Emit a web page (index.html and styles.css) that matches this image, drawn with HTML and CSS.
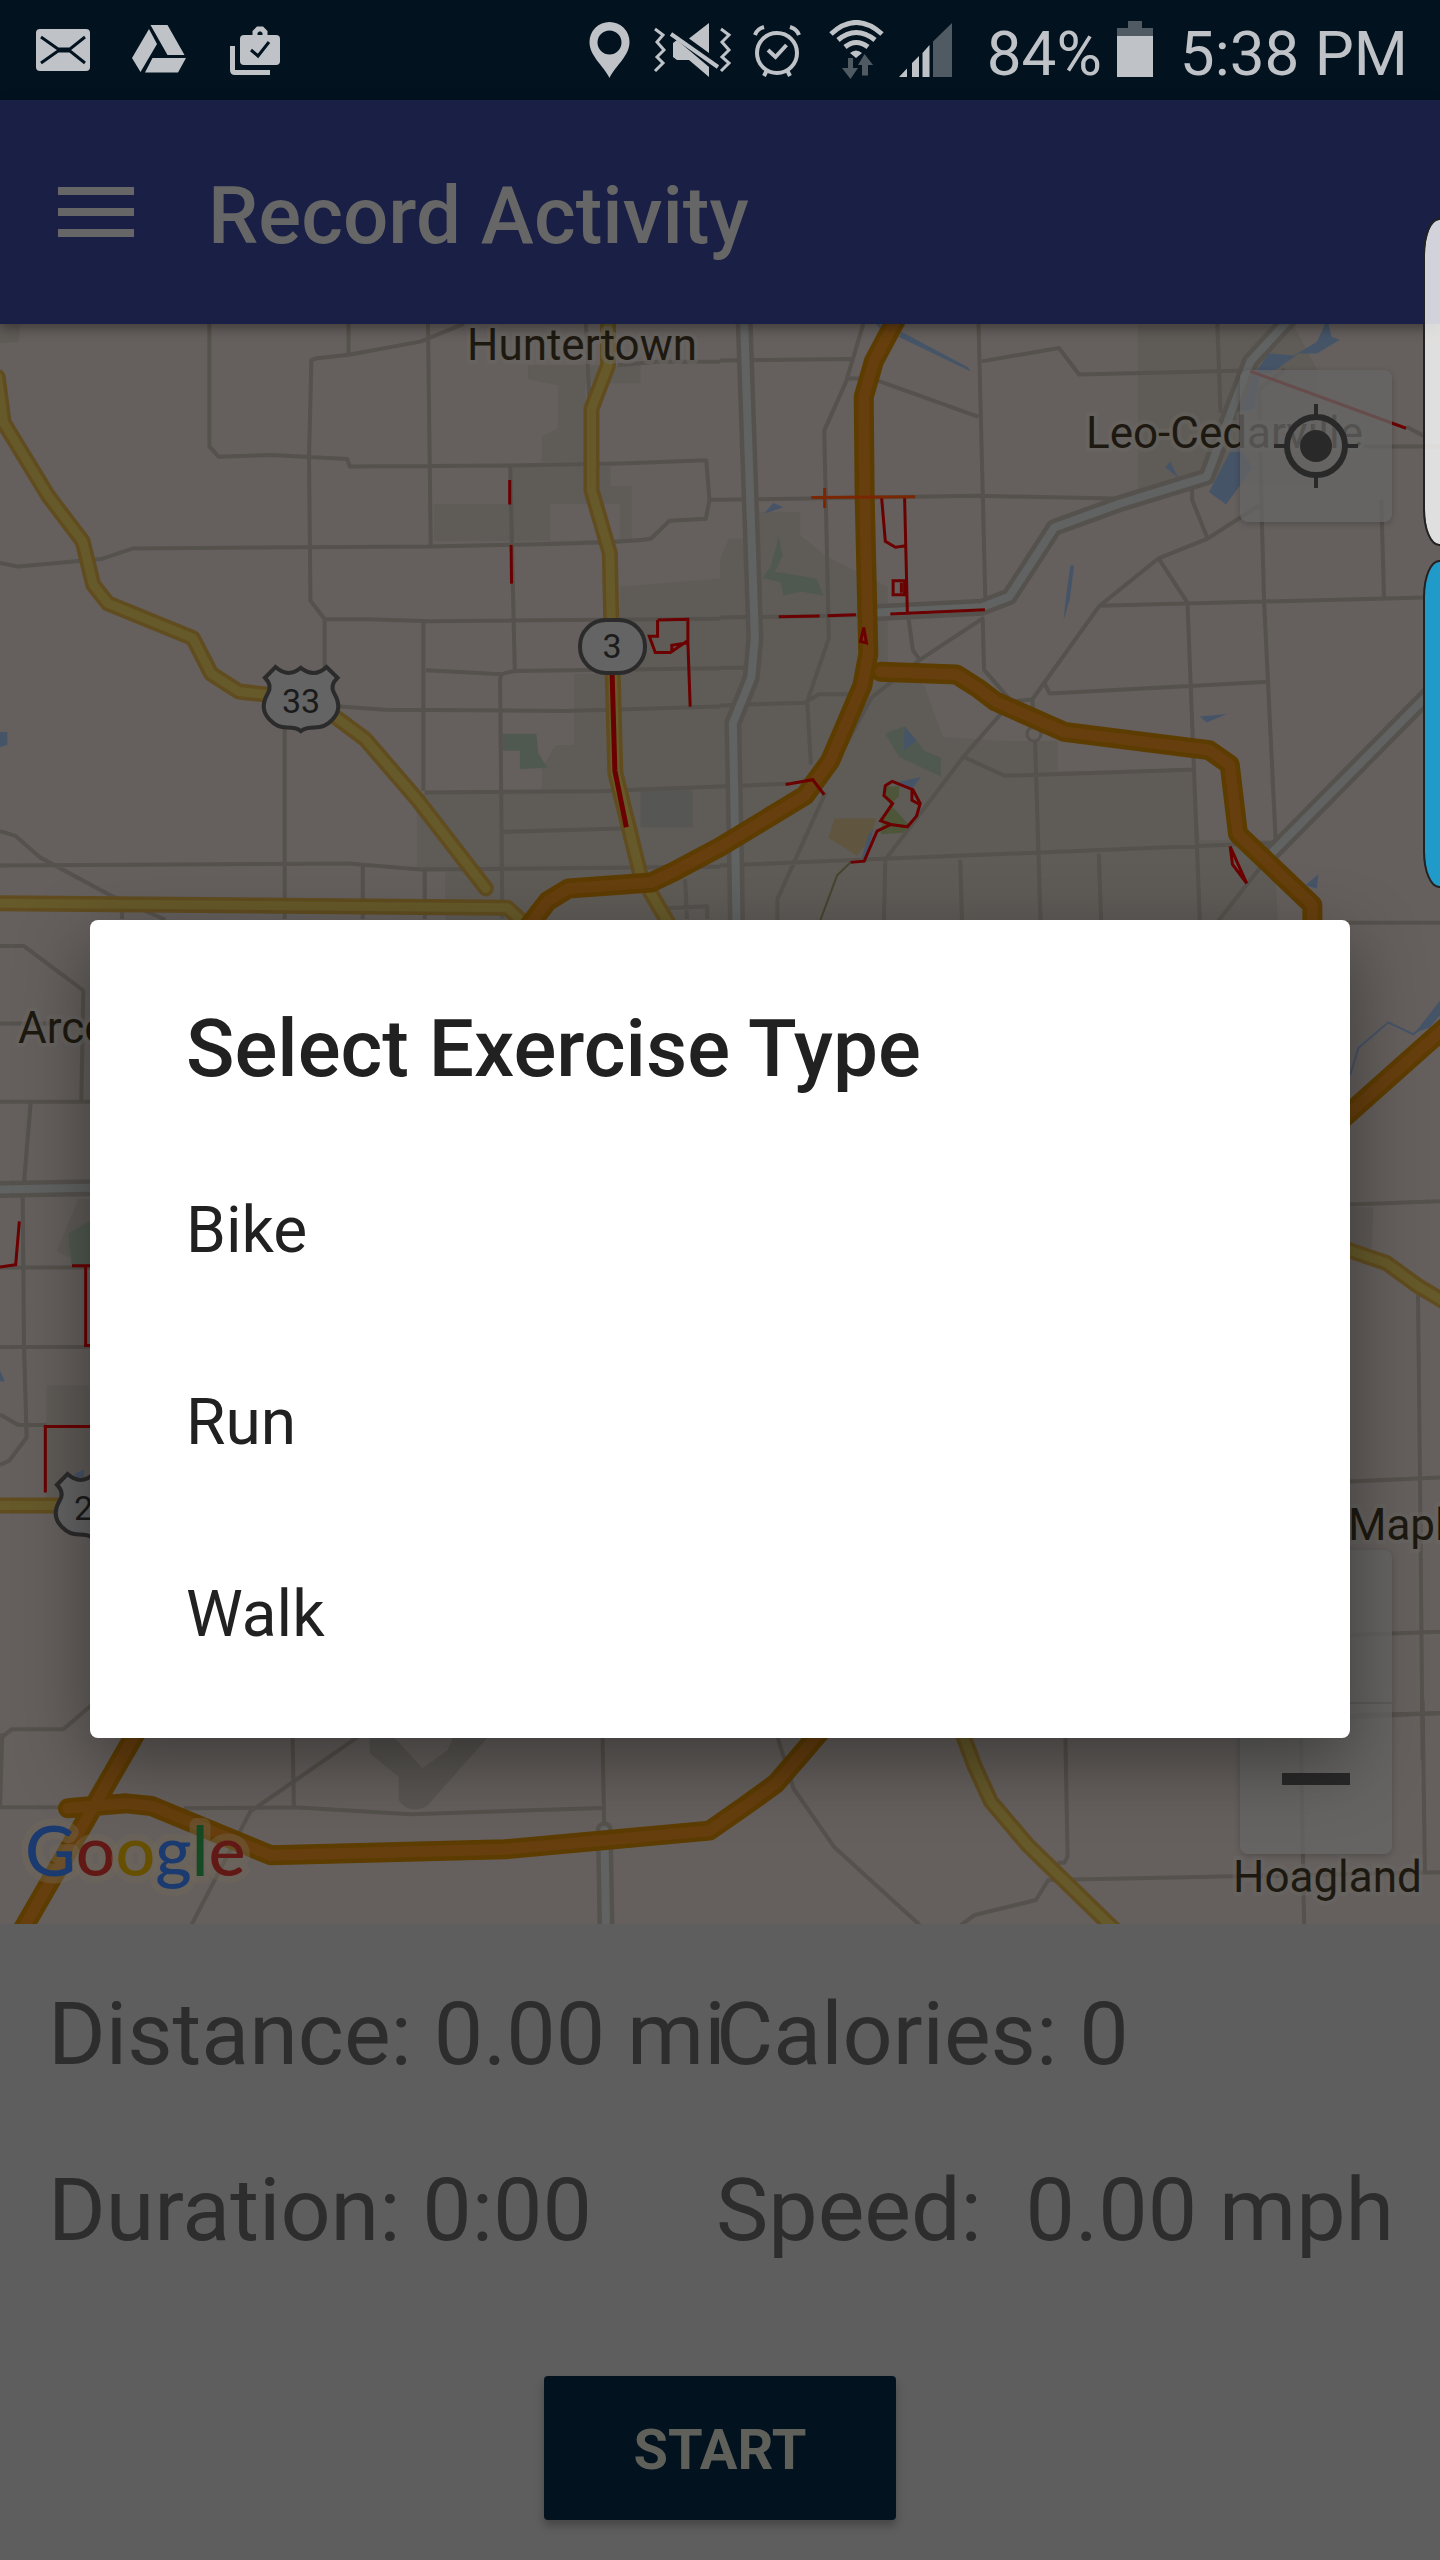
FILE: index.html
```html
<!DOCTYPE html>
<html lang="en">
<head>
<meta charset="utf-8">
<meta name="viewport" content="width=device-width, initial-scale=1">
<title>Record Activity</title>
<link rel="stylesheet" href="styles.css">
</head>
<body>
<div class="status-bar">
  <div class="status-notifications">
    <svg width="54" height="60" viewBox="36 20 54 60" aria-hidden="true"><rect class="on" x="36" y="29" width="54" height="42" rx="4"/><path class="cut" d="M41 37L58 49H70L85 37M41 63L58 51H70L85 63"/></svg>
    <svg width="54" height="60" viewBox="132 20 54 60" aria-hidden="true"><path class="on" d="M132 58L149 29L157 44L140.500 72ZM150.500 25H167.500L184.500 55H167.500ZM152.500 58H186L178 72.500H145Z"/></svg>
    <svg width="54" height="60" viewBox="228 20 54 60" aria-hidden="true"><rect class="on" x="240" y="35" width="40" height="30" rx="4"/><path class="line" d="M255 36V32L258 29H262L265 32V36M232.500 46V70Q232.500 72.500 235 72.500H270" stroke-width="5"/><path class="cut" d="M251 50L258 56L269 42" stroke-width="4"/></svg>
  </div>
  <div class="status-system">
    <svg width="50" height="60" viewBox="588 20 50 60" aria-hidden="true"><path class="on" fill-rule="evenodd" d="M608.500 78C602 65 588.500 56 588.500 42A20 20 0 0 1 628.500 42C628.500 56 615 65 608.500 78ZM608.500 30.500A12 12 0 1 0 608.500 54.500A12 12 0 1 0 608.500 30.500Z"/></svg>
    <svg width="84" height="60" viewBox="652 20 84 60" aria-hidden="true"><path class="line" stroke-width="3" d="M654 29L662 35L656 42L663 50L656 57L662 63L654 71M720 29L728 35L721 42L728 50L721 57L728 63L720 71"/><path class="on" d="M688 38.500L708 23V53ZM676 40L708 67V77L688 60H676L672 57V43Z"/><path class="line" stroke-width="4" d="M670 34L717 67"/></svg>
    <svg width="64" height="60" viewBox="750 20 64 60" aria-hidden="true"><circle class="line" cx="776" cy="53" r="20" stroke-width="4"/><path class="line" stroke-width="4" d="M767 50L774.500 57L785.500 45M754 35Q756 29 763 27M789 27Q796 29 798 35M766 70L763 76M786 70L789 76"/></svg>
    <svg width="56" height="60" viewBox="828 20 56 60" aria-hidden="true"><path class="line" stroke-width="5" d="M830 34Q855 11 881 34M837 40Q855 25 874 40M844 47Q855 38 867 47"/><path class="on" d="M849 53Q855 48 861 53L855 58Z"/><path class="off" d="M847 58H852V68H857L849.500 79L841 68H847ZM863.500 54L872 65H867V75.500H861V65H857Z"/></svg>
    <svg width="54" height="60" viewBox="898 20 54 60" aria-hidden="true"><path class="on" d="M898 77L906 68.500V77ZM911 63L918 56V77H911ZM921.500 53L928.500 45V77H921.500Z"/><path class="off" d="M932 41.500L951 23V77H932Z"/></svg>
    <span class="battery-level">84%</span>
    <svg width="38" height="60" viewBox="1116 20 38 60" aria-hidden="true"><path class="off" d="M1128 21H1142V28H1153V36H1117V28H1128Z"/><path class="on" d="M1117 36H1153V77H1117Z"/></svg>
    <span class="clock">5:38 PM</span>
  </div>
</div>

<header class="app-bar">
  <button class="menu-button" type="button" aria-label="Open menu">
    <svg width="76" height="50" viewBox="0 0 76 50" aria-hidden="true"><path d="M0 0H76V8H0ZM0 21H76V29H0ZM0 42H76V50H0Z"/></svg>
  </button>
  <h1>Record Activity</h1>
</header>

<main>
<section class="map" aria-label="Map">
  <svg class="map-canvas" viewBox="0 324 1440 1600" preserveAspectRatio="xMidYMid slice" role="img" aria-label="Road map around Huntertown and Leo-Cedarville">
    <defs>
      <g id="yellow-roads">
        <path transform="translate(0 310) scale(.4592 .3954)" d="M-5 170L8 285L105 470L180 585L203 695L235 742L420 830L460 920L520 965L600 975L720 1020L795 1085L910 1240L1058 1463M1324 10V140L1288 250V455L1328 615L1331 780L1340 1170L1395 1430L1460 1560M-10 1500L1105 1512L1140 1550"/>
        <path transform="translate(1240 900) scale(.3333 .5485)" d="M310 635L440 662L530 702L620 735"/>
        <path transform="translate(0 900) scale(.3333 .5485)" d="M-20 1104H180"/>
        <path transform="translate(720 1700) scale(.4592 .3333)" d="M525 90L555 200L590 305L670 435L860 690"/>
      </g>
      <g id="orange-roads">
        <path transform="translate(720 310) scale(.4592 .3954)" d="M-425 1570L-375 1495L-330 1463L-150 1448L-100 1420L0 1358L185 1228L240 1140L310 950L323 870L321 770L315 470L313 220L335 130L390 10M350 915L515 922L560 955L600 990L750 1067L1065 1113L1110 1150L1128 1325L1290 1505V1550"/>
        <path transform="translate(1240 900) scale(.3333 .5485)" d="M310 398L620 230"/>
        <path transform="translate(0 1700) scale(.4592 .3333)" d="M300 90L40 710M148 325L275 310L330 318L590 466L1100 448L1545 392L1620 320L1690 250L1790 90"/>
      </g>
      <g id="grey-highways">
        <path transform="translate(720 310) scale(.4592 .3954)" d="M52 10L76 830L68 930L28 1045L34 1400L36 1560M1250 10L1155 130L1060 422L870 490L728 550L630 725L570 752L345 765M1600 905L1200 1375"/>
        <path transform="translate(0 900) scale(.3333 .5485)" d="M-10 528L300 524"/>
        <path transform="translate(0 1700) scale(.4592 .3333)" d="M1316 390L1320 700"/>
      </g>
    </defs>

    <!-- land cover -->
    <rect class="land" x="0" y="324" width="1440" height="1600"/>
    <g class="urban">
      <path transform="translate(0 310) scale(.4592 .3954)" d="M0 35H45L40 80L0 85ZM1150 140H1395V185H1275V385H1180V320L1215 300V190L1150 175ZM945 490H1110V395H1330V445H1375V580L1195 585H945ZM1350 700L1568 680V1545H970V1415H908V1250L925 1220H1180V1160L1210 1100H1250V920H1345ZM1198 490V585H1350V490Z"/>
      <path transform="translate(720 310) scale(.4592 .3954)" d="M0 630L20 578H80V510H175V570L235 625L365 700V890L445 950L485 1080L620 1090H735V1165H1030L1045 1340H1205L1215 1545H0ZM910 40H1250L1300 150V440H1020L910 480Z"/>
      <path transform="translate(0 900) scale(.3333 .5485)" d="M170 640L235 545H300V1100H140V885H270V670Z"/>
      <path transform="translate(1240 900) scale(.3333 .5485)" d="M330 560H400L395 635H330Z"/>
    </g>
    <path class="cemetery" transform="translate(0 310) scale(.4592 .3954)" d="M1395 1215H1508V1308H1395Z"/>
    <g class="park">
      <path transform="translate(0 310) scale(.4592 .3954)" d="M1095 1072H1168L1172 1120L1192 1158L1132 1161V1115H1095Z"/>
      <path transform="translate(720 310) scale(.4592 .3954)" d="M128 575L136 620L120 662L210 680L226 723L178 712L138 722L132 688L92 678L110 650ZM360 1072L402 1052L445 1115L481 1132V1180L390 1130Z"/>
      <path transform="translate(0 900) scale(.3333 .5485)" d="M205 608L270 585V665H215Z"/>
    </g>
    <g class="woods"><path transform="translate(720 310) scale(.4592 .3954)" d="M360 1205H390V1230L370 1250L410 1300L400 1322L350 1325L355 1290L370 1250L358 1230Z"/></g>
    <g class="campus"><path transform="translate(720 310) scale(.4592 .3954)" d="M250 1286H340L325 1340L298 1380L236 1334Z"/></g>
    <g class="water">
      <path transform="translate(720 310) scale(.4592 .3954)" d="M340 35L350 48V35ZM395 55L540 145L545 155L390 68ZM1325 35L1332 68L1350 75L1300 110H1260L1200 160H1165L1195 110L1250 115L1300 80L1318 35ZM1165 160H1175L1165 250L1130 260ZM1115 350H1135L1160 400L1102 492L1065 460ZM980 384L998 425L970 398ZM116 488L138 499L96 515ZM763 646H771L762 730L748 785L753 730ZM1045 1028L1104 1022L1060 1043ZM402 1055L428 1088L400 1114ZM385 1195L437 1181L420 1208ZM1303 1427L1300 1463L1275 1455ZM322 1330L335 1310L318 1390H308Z"/>
      <path transform="translate(0 310) scale(.4592 .3954)" d="M0 1067H16V1100L0 1105Z"/>
      <path transform="translate(1240 900) scale(.3333 .5485)" d="M600 183L525 242L570 232L600 210Z"/>
      <path transform="translate(0 900) scale(.3333 .5485)" d="M0 858L15 878H0ZM225 1046L252 1038V1052H225Z"/>
    </g>
    <path class="creek" transform="translate(1240 900) scale(.3333 .5485)" d="M330 320L355 270L445 223L520 245L580 215"/>
    <path class="airport" transform="translate(0 1700) scale(.4592 .3333)" d="M805 100H850L920 205L975 150L990 100H1070L930 318Q890 345 868 300V230L805 160Z"/>

    <!-- local roads -->
    <g class="local">
      <path transform="translate(0 310) scale(.4592 .3954)" d="M456 35V345L476 371L590 367L756 377L762 396L1110 393L1350 388L1538 380L1545 480L1537 528L1458 533L1418 578Q1380 588 1110 594L938 598L290 603L220 630L40 649L0 640M759 35V110M1010 35L915 80L760 113L690 122L678 127L673 372L676 735L707 782V905M932 35L938 595M1111 393L1121 910M707 782H800L940 787L1568 781M922 787V1216M928 911L1092 921L1120 913L1568 906M1092 921L1089 935L1094 1540M740 1003L840 1011L1230 1014L1568 1003M925 1220L1300 1217L1568 1205M1094 1320L1370 1311M0 1405L760 1400L915 1415L1568 1408M620 1060V1540M790 1405V1540M925 1415V1540M0 1318L34 1330L88 1385L240 1480L360 1542M1276 35L1284 240M1345 140L1430 131H1568M1545 480H1568M266 1520V1540M1492 1440L1496 1540M1450 1513L1540 1508V1540"/>
      <path transform="translate(720 310) scale(.4592 .3954)" d="M0 128L285 124M312 35L275 180L227 305L237 830L190 990L198 1150M230 1220L125 1490V1550M275 173H330L563 270M563 35L578 740M570 130L738 96L782 163L1150 153M1083 35L1090 260M0 480L560 470L860 477M1028 450V480L1062 578L955 628L825 750L680 985L685 1060M1062 578L1180 490M955 628L1018 740L1045 1545M825 748L1535 727M1175 250L1180 535L1185 740L1210 1340M1175 250V200L1230 150M1440 480L1446 725M705 940L718 970L1195 940M0 778L300 772M410 775L420 860L435 885L572 780L575 910L635 990L680 985M435 885L330 980L250 1150M620 1010L530 1130L360 1390L357 1545M530 1130L620 1178L1035 1162M686 1085L698 1545M0 1405L1200 1348M523 1390L527 1545M825 1375L830 1545M0 905H55M0 1000L185 993L215 972H300M0 1205L150 1198M1313 1550H1568M1400 345H1568M1495 295L1535 320M1200 1375L1085 1545"/>
      <path transform="translate(0 900) scale(.3333 .5485)" d="M0 84H72L250 165L244 368M0 225H250M0 368H280M92 370L72 515M68 540L72 815L80 980L28 1022L0 1030M0 670H280M0 815H280M0 938L55 957H140M280 1465L190 1512H35L8 1525"/>
      <path transform="translate(1240 900) scale(.3333 .5485)" d="M330 555L600 549M534 720L540 1055L548 1568M330 1060L600 1053M330 1340L600 1334M330 1490L600 1482"/>
      <path transform="translate(0 1700) scale(.4592 .3333)" d="M5 100L0 325M0 322H140M400 325L640 322L895 343L1312 324M637 100L640 322M780 110L545 335L415 680M1312 100L1316 400"/>
      <path transform="translate(720 1700) scale(.4592 .3333)" d="M125 110L160 265L248 440L435 675M752 100L757 470L750 488H735M520 680L555 645L688 600L715 540L1568 517M1265 100L1272 675M1530 0L1535 517M1380 45L1568 40"/>
    </g>

    <!-- highways: casing first, then fill -->
    <use class="grey-case" href="#grey-highways"/><use class="grey-fill" href="#grey-highways"/>
    <use class="yellow-case" href="#yellow-roads"/><use class="yellow-fill" href="#yellow-roads"/>
    <circle class="roundabout" cx="1034" cy="734" r="7"/>
    <use class="orange-case" href="#orange-roads"/><use class="orange-fill" href="#orange-roads"/>

    <!-- trails -->
    <g class="trail">
      <path transform="translate(0 310) scale(.4592 .3954)" d="M1110 430V492M1113 594L1114 692M1432 784L1498 782V840L1503 1003M1432 784V825H1414L1427 866H1460L1498 836M1463 862V848L1495 842"/>
      <path class="trail-wide" transform="translate(0 310) scale(.4592 .3954)" d="M1333 920L1339 1165L1364 1308"/>
      <path transform="translate(720 310) scale(.4592 .3954)" d="M352 475L360 585L382 600L405 596M402 475L408 765M377 685H402V720H377ZM395 690V715M128 776L217 774M234 773L296 771M371 769L577 758M313 803L306 838L319 842ZM143 1200L202 1188L227 1226M375 1192L420 1213L436 1248L428 1280L408 1307L372 1301L350 1292L376 1248L357 1228L360 1203ZM418 1215V1240L434 1250M372 1301L342 1318L314 1394L284 1397M1111 1357L1147 1450L1116 1402ZM1155 155L1494 299"/>
      <path transform="translate(0 900) scale(.3333 .5485)" d="M0 669L47 665L58 586M216 667H280M257 668V812H280M136 1080V960H280"/>
    </g>
    <path class="trail-orange" transform="translate(720 310) scale(.4592 .3954)" d="M199 474L425 472M228 450V501"/>
    <path class="trail-olive" transform="translate(720 310) scale(.4592 .3954)" d="M284 1397L255 1430L218 1545"/>

    <!-- route shields -->
    <rect class="shield" x="580" y="620" width="65" height="53" rx="26"/>
    <text class="route" x="612" y="658">3</text>
    <path class="shield" transform="translate(0 310) scale(.4592 .3954)" d="M600 903Q628 932 655 905Q685 932 711 903L735 930Q717 950 728 970Q748 1010 722 1038Q708 1056 685 1056Q665 1056 655 1065Q647 1056 625 1056Q603 1056 589 1038Q563 1010 583 970Q594 950 577 930Z"/>
    <text class="route" x="301" y="713">33</text>
    <path class="shield" transform="translate(-208 1117) scale(.4592 .3954)" d="M600 903Q628 932 655 905Q685 932 711 903L735 930Q717 950 728 970Q748 1010 722 1038Q708 1056 685 1056Q665 1056 655 1065Q647 1056 625 1056Q603 1056 589 1038Q563 1010 583 970Q594 950 577 930Z"/>
    <text class="route" x="93" y="1520">24</text>

    <!-- places -->
    <g class="place">
      <text x="467" y="360">Huntertown</text>
      <text x="1086" y="448">Leo-Cedarville</text>
      <text x="18" y="1043">Arcola</text>
      <text x="1348" y="1540">Maples</text>
      <text x="1233" y="1892">Hoagland</text>
    </g>
    <text class="google" x="25" y="1876"><tspan class="g-blue">G</tspan><tspan class="g-red">o</tspan><tspan class="g-yellow">o</tspan><tspan class="g-blue">g</tspan><tspan class="g-green">l</tspan><tspan class="g-red">e</tspan></text>
  </svg>

  <button class="map-button locate" type="button" aria-label="My location">
    <svg width="84" height="84" viewBox="0 0 84 84" aria-hidden="true"><path d="M42 0V14M42 70V84M0 42H14M70 42H84" stroke-width="4"/><circle cx="42" cy="42" r="29" stroke-width="6"/><circle class="dot" cx="42" cy="42" r="16"/></svg>
  </button>
  <div class="zoom">
    <button class="map-button" type="button" aria-label="Zoom in"><svg width="68" height="68" viewBox="0 0 68 68" aria-hidden="true"><path d="M0 34H68M34 0V68" stroke-width="12"/></svg></button>
    <button class="map-button" type="button" aria-label="Zoom out"><svg width="68" height="68" viewBox="0 0 68 68" aria-hidden="true"><path d="M0 34H68" stroke-width="12"/></svg></button>
  </div>
</section>

<section class="stats" aria-label="Activity">
  <div class="stat-grid">
    <span>Distance: 0.00 mi</span><span>Calories: 0</span>
    <span>Duration: 0:00</span><span>Speed:  0.00 mph</span>
  </div>
  <button class="start" type="button">START</button>
</section>
</main>

<div class="scrim">
  <div class="dialog" role="dialog" aria-modal="true" aria-labelledby="dialog-title">
    <h2 id="dialog-title">Select Exercise Type</h2>
    <button type="button">Bike</button>
    <button type="button">Run</button>
    <button type="button">Walk</button>
  </div>
</div>
<div class="edge-tabs" aria-hidden="true"><i class="tab-light"></i><i class="tab-blue"></i></div>
</body>
</html>
```
FILE: styles.css
```css
* { box-sizing: border-box; }

body {
  margin: 0;
  min-height: 100vh;
  display: flex;
  flex-direction: column;
  position: relative;
  overflow-x: hidden;
  background: #5e5e5e;
  font-family: Roboto, "Liberation Sans", sans-serif;
}

button {
  margin: 0;
  padding: 0;
  border: 0;
  font: inherit;
  color: inherit;
  background: none;
}

svg { display: block; }

/* status bar */
.status-bar {
  height: 100px;
  padding: 0 32px 0 36px;
  display: flex;
  align-items: center;
  justify-content: space-between;
  background: #02131f;
  color: #bfc3c8;
  font-size: 62px;
}
.status-notifications { display: flex; gap: 42px; }
.status-system { display: flex; align-items: center; gap: 14px; }
.battery-level { padding: 6px 0 0 20px; }
.clock { padding: 6px 0 0 12px; }
.on { fill: #bfc3c8; }
.off { fill: #505a63; }
.line { fill: none; stroke: #bfc3c8; }
.cut { fill: none; stroke: #02131f; stroke-width: 3; }

/* app bar */
.app-bar {
  position: relative;
  z-index: 1;
  height: 224px;
  padding-left: 58px;
  display: flex;
  align-items: center;
  gap: 74px;
  background: #191f45;
  color: #666;
  box-shadow: 0 4px 12px rgba(0, 0, 0, .4);
}
.menu-button svg { fill: #666; }
.app-bar h1 {
  margin: 0;
  padding-top: 8px;
  font-size: 80px;
  font-weight: 500;
}

main { flex: 1; display: flex; flex-direction: column; }

/* map */
.map { position: relative; flex: 1; min-height: 600px; overflow: hidden; }
.map-canvas { position: absolute; inset: 0; width: 100%; height: 100%; }
.map-canvas path { vector-effect: non-scaling-stroke; }
.land { fill: #65605e; }
.urban { fill: #5f5b57; }
.cemetery { fill: #565655; }
.park { fill: #50594f; }
.woods { fill: #4d5638; }
.campus { fill: #60563f; }
.water { fill: #465468; }
.airport { fill: #595653; }
.creek { fill: none; stroke: #465468; stroke-width: 2; }
.local { fill: none; stroke: #55514c; stroke-width: 4; stroke-linejoin: round; }
.grey-case, .grey-fill, .yellow-case, .yellow-fill, .orange-case, .orange-fill {
  fill: none;
  stroke-linejoin: round;
  stroke-linecap: round;
}
.grey-case { stroke: #55524e; stroke-width: 17; }
.grey-fill { stroke: #616363; stroke-width: 8; }
.yellow-case { stroke: #604c1f; stroke-width: 16; }
.yellow-fill { stroke: #665a2a; stroke-width: 9; }
.orange-case { stroke: #5d3c00; stroke-width: 20; }
.orange-fill { stroke: #673f0e; stroke-width: 11; }
.roundabout { fill: #65605e; stroke: #55514c; stroke-width: 3; }
.trail { fill: none; stroke: #6b0000; stroke-width: 3; }
.trail-wide { stroke-width: 5; }
.trail-orange { fill: none; stroke: #7a2600; stroke-width: 3; }
.trail-olive { fill: none; stroke: #444630; stroke-width: 2; }
.shield { fill: #646464; stroke: #2b2b2b; stroke-width: 4; }
.route { fill: #1b1b1b; font-size: 34px; text-anchor: middle; }
.place {
  fill: #1d1910;
  stroke: rgba(104, 102, 98, .6);
  stroke-width: 8;
  stroke-linejoin: round;
  paint-order: stroke;
  font-size: 44px;
}
.google {
  font-family: Lato, "Open Sans", sans-serif;
  font-size: 70px;
  font-weight: 500;
  stroke: rgba(116, 104, 88, .4);
  stroke-width: 14;
  stroke-linejoin: round;
  paint-order: stroke;
}
.g-blue { fill: #1b3a70; }
.g-red { fill: #621915; }
.g-yellow { fill: #665000; }
.g-green { fill: #164a25; }

.map-button {
  display: grid;
  place-items: center;
  width: 152px;
  height: 152px;
  background: rgba(102, 102, 102, .75);
}
.map-button svg { fill: none; stroke: #292929; }
.map-button .dot { fill: #292929; stroke: none; }
.locate {
  position: absolute;
  top: 46px;
  right: 48px;
  border-radius: 8px;
  box-shadow: 0 2px 6px rgba(0, 0, 0, .2);
}
.zoom {
  position: absolute;
  right: 48px;
  bottom: 70px;
  border-radius: 8px;
  overflow: hidden;
  box-shadow: 0 2px 6px rgba(0, 0, 0, .2);
}
.zoom .map-button + .map-button { border-top: 2px solid #5a5a5a; }

/* figures */
.stats {
  padding: 22px 56px 40px 48px;
  display: flex;
  flex-direction: column;
  align-items: center;
  gap: 78px;
  color: #2d2d2d;
}
.stat-grid {
  width: 100%;
  display: grid;
  grid-template-columns: repeat(2, minmax(0, 1fr));
  font-size: 88px;
  line-height: 176px;
  white-space: pre;
}
.start {
  width: 352px;
  height: 144px;
  margin-left: 8px;
  padding-top: 4px;
  border-radius: 4px;
  background: #02131f;
  color: #5f605a;
  font-size: 56px;
  font-weight: 700;
  box-shadow: 0 6px 8px rgba(0, 0, 0, .25);
}

/* dialog */
.scrim {
  position: absolute;
  z-index: 2;
  inset: 98px 0 0;
  padding: 0 90px;
  display: flex;
  align-items: center;
}
.dialog {
  flex: 1;
  padding: 82px 0 28px;
  display: flex;
  flex-direction: column;
  border-radius: 8px;
  background: #fff;
  color: #212121;
  box-shadow: 0 24px 72px rgba(0, 0, 0, .4);
}
.dialog h2 {
  margin: 0 0 38px;
  padding: 0 96px;
  font-size: 80px;
  font-weight: 500;
  line-height: 94px;
}
.dialog button {
  height: 192px;
  padding: 0 96px;
  font-size: 64px;
  text-align: left;
}

/* edge panel handles: wider than the strip, so their curve runs off the screen */
.edge-tabs {
  position: absolute;
  z-index: 3;
  top: 218px;
  right: 0;
  width: 17px;
  overflow: hidden;
  display: flex;
  flex-direction: column;
  gap: 14px;
}
.edge-tabs i {
  width: 32px;
  height: 328px;
  border: 2px solid #222;
  border-radius: 28px / 64px;
  background-clip: padding-box;
}
.tab-light { background-color: rgba(255, 255, 255, .8); }
.tab-blue { background-color: #1f9ac9; }
```
